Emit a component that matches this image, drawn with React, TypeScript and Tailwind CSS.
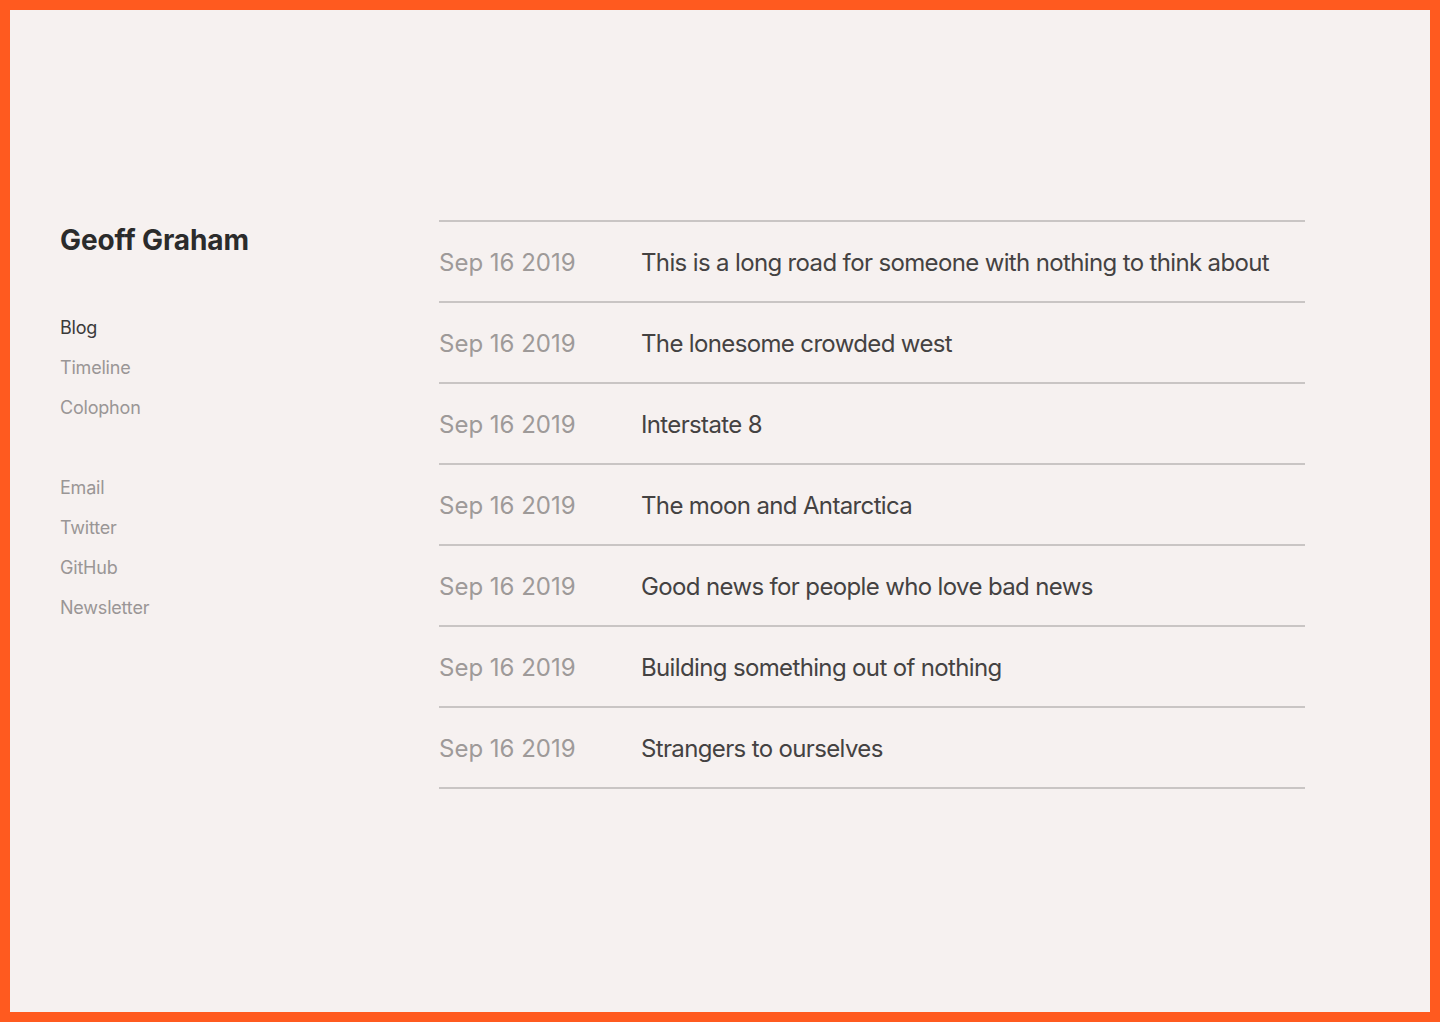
const posts = [
  "This is a long road for someone with nothing to think about",
  "The lonesome crowded west",
  "Interstate 8",
  "The moon and Antarctica",
  "Good news for people who love bad news",
  "Building something out of nothing",
  "Strangers to ourselves",
];

const pages = ["Blog", "Timeline", "Colophon"];
const links = ["Email", "Twitter", "GitHub", "Newsletter"];

export default function App() {
  return (
    <div
      className="h-[1022px] w-full border-[10px] border-[#ff5a1f] bg-[#f6f1f0]"
      style={{ fontFamily: "Inter, 'Noto Sans', sans-serif" }}
    >
      <div className="flex px-[50px] pt-[210px]">
        <aside className="w-[379px] shrink-0">
          <h1 className="pt-[3px] text-[28px] font-bold leading-[34px] tracking-[-0.1px] text-[#2b2b2b]">
            Geoff Graham
          </h1>
          <nav className="mt-[51px] flex flex-col text-[18px] leading-[40px] tracking-[-0.2px]">
            {pages.map((p, i) => (
              <a
                key={p}
                href="#"
                className={i === 0 ? "text-[#3a3a3a]" : "text-[#9a9696]"}
              >
                {p}
              </a>
            ))}
          </nav>
          <nav className="mt-[40px] flex flex-col text-[18px] leading-[40px] tracking-[-0.2px]">
            {links.map((l) => (
              <a key={l} href="#" className="text-[#9a9696]">
                {l}
              </a>
            ))}
          </nav>
        </aside>

        <ul className="w-[866px] border-t-2 border-[#c9c5c4]">
          {posts.map((t) => (
            <li
              key={t}
              className="flex h-[81px] items-center border-b-2 border-[#c9c5c4] pt-[2px] text-[24px]"
            >
              <span className="w-[202px] shrink-0 text-[#9e9a99]">Sep 16 2019</span>
              <span className="tracking-[-0.64px] text-[#444242]">{t}</span>
            </li>
          ))}
        </ul>
      </div>
    </div>
  );
}
